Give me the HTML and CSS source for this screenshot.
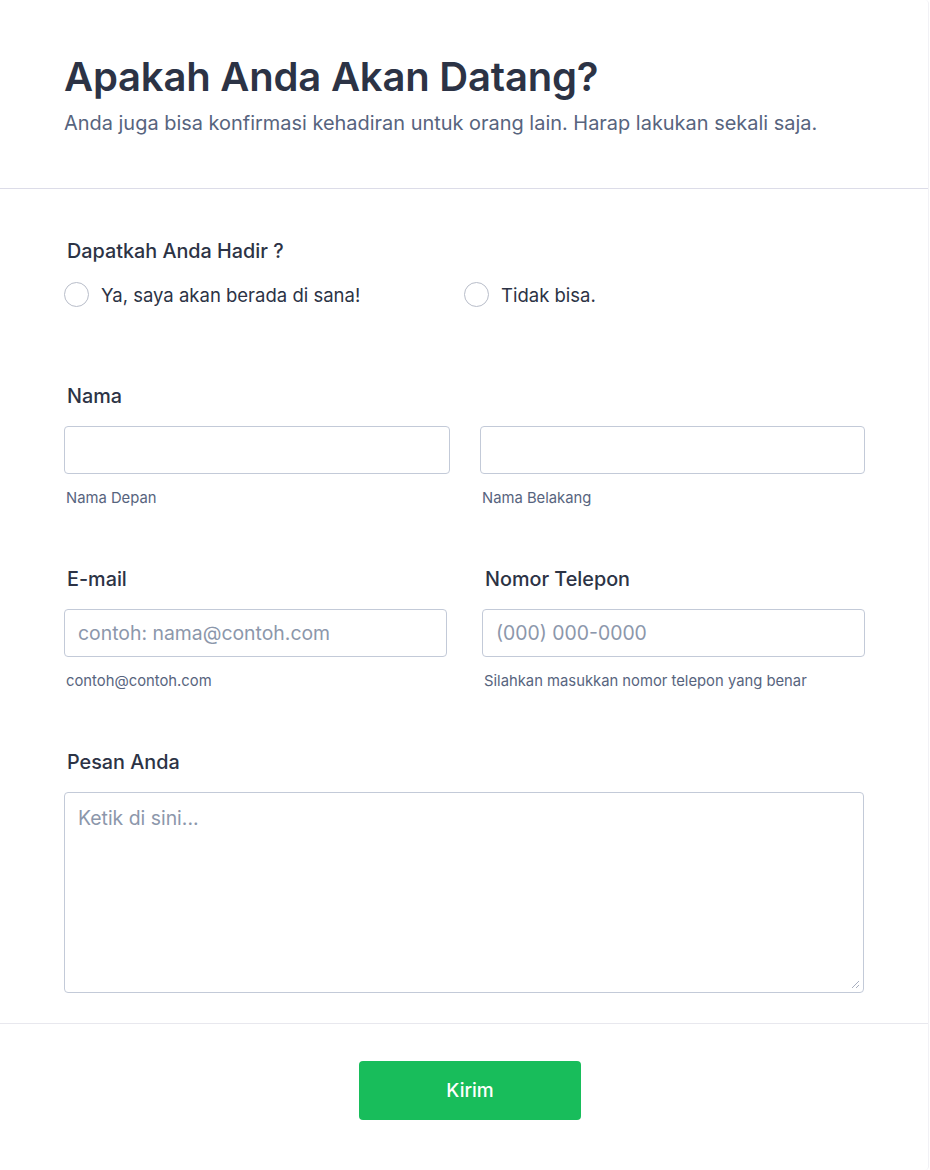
FILE: index.html
```html
<!DOCTYPE html>
<html lang="id">
<head>
<meta charset="utf-8">
<title>RSVP</title>
<link rel="stylesheet" href="styles.css">
</head>
<body>
<div class="card">
  <header class="head">
    <h1 class="title">Apakah Anda Akan Datang?</h1>
    <p class="subtitle">Anda juga bisa konfirmasi kehadiran untuk orang lain. Harap lakukan sekali saja.</p>
  </header>
  <form class="body">
    <div class="field attend">
      <div class="label">Dapatkah Anda Hadir ?</div>
      <div class="radios">
        <label class="radio"><span class="circle"></span><span>Ya, saya akan berada di sana!</span></label>
        <label class="radio"><span class="circle"></span><span>Tidak bisa.</span></label>
      </div>
    </div>
    <div class="field name">
      <div class="label">Nama</div>
      <div class="row row-name">
        <div class="col"><div class="input"></div><div class="sub">Nama Depan</div></div>
        <div class="col"><div class="input"></div><div class="sub">Nama Belakang</div></div>
      </div>
    </div>
    <div class="row row-contact">
      <div class="col">
        <div class="label">E-mail</div>
        <div class="input"><span class="ph">contoh: nama@contoh.com</span></div>
        <div class="sub">contoh@contoh.com</div>
      </div>
      <div class="col">
        <div class="label">Nomor Telepon</div>
        <div class="input"><span class="ph">(000) 000-0000</span></div>
        <div class="sub">Silahkan masukkan nomor telepon yang benar</div>
      </div>
    </div>
    <div class="field msg">
      <div class="label">Pesan Anda</div>
      <div class="textarea"><span class="ph">Ketik di sini...</span>
        <svg class="grip" width="10" height="10" viewBox="0 0 10 10"><path d="M9 2L2 9M9 6L6 9" stroke="#a8afc0" stroke-width="1"/></svg>
      </div>
    </div>
  </form>
  <div class="foot">
    <button class="submit" type="button">Kirim</button>
  </div>
</div>
</body>
</html>
```
FILE: styles.css
```css
* { box-sizing: border-box; }
html, body { margin: 0; padding: 0; background: #fff; }
body { font-family: Inter, "Noto Sans", sans-serif; color: #2c3345; }
.card {
  width: 929px;
  min-height: 1170px;
  background: #fff;
  border-right: 1px solid #f1f1f5;
  border-radius: 0 4px 4px 0;
}
.head {
  padding: 55px 64px 0 64px;
  height: 189px;
  border-bottom: 1px solid #dcdce8;
}
.title {
  margin: 0;
  font-size: 40px;
  font-weight: 600;
  line-height: 44px;
  letter-spacing: -0.2px;
  color: #2c3345;
}
.subtitle {
  margin: 12px 0 0;
  font-size: 19.95px;
  line-height: 24px;
  color: #57647e;
}
.body {
  padding: 49px 64px 0 64px;
  height: 835px;
  border-bottom: 1px solid #e8e8ee;
}
.label {
  font-size: 19.8px;
  font-weight: 500;
  line-height: 26px;
  color: #2c3345;
  padding-left: 3px;
}
.radios {
  display: flex;
  margin-top: 18px;
}
.radio {
  display: flex;
  align-items: center;
  gap: 12px;
  font-size: 18.5px;
  line-height: 24px;
  color: #2c3345;
  width: 401px;
}
.circle {
  width: 25px;
  height: 25px;
  border: 1px solid #b8bdc9;
  border-radius: 50%;
  flex: none;
}
.field.name { margin-top: 76px; }
.row { display: grid; }
.row-name { grid-template-columns: 386px 385px; column-gap: 30px; margin-top: 17px; }
.row-contact { grid-template-columns: 383px 383px; column-gap: 35px; margin-top: 59px; }
.input {
  height: 48px;
  border: 1px solid #c3cad8;
  border-radius: 4px;
  display: flex;
  align-items: center;
  padding-left: 13px;
}
.row-contact .input { margin-top: 17px; }
.ph {
  font-size: 19.4px;
  color: #8c97ab;
}
.sub {
  margin-top: 15px;
  font-size: 14.8px;
  line-height: 18px;
  color: #57647e;
  padding-left: 2px;
}
.row-contact .sub { margin-top: 15px; }
.field.msg { margin-top: 59px; }
.textarea {
  position: relative;
  margin-top: 17px;
  height: 201px;
  border: 1px solid #c3cad8;
  border-radius: 4px;
  padding: 13px 13px;
}
.textarea .ph { line-height: 24px; }
.grip { position: absolute; right: 3px; bottom: 3px; }
.foot {
  display: flex;
  justify-content: center;
  padding-top: 37px;
}
.submit {
  width: 222px;
  height: 59px;
  border: 0;
  border-radius: 4px;
  background: #18bd5b;
  color: #fff;
  font-family: Inter, "Noto Sans", sans-serif;
  font-size: 19px;
  font-weight: 500;
  margin-left: 12px;
}
```
